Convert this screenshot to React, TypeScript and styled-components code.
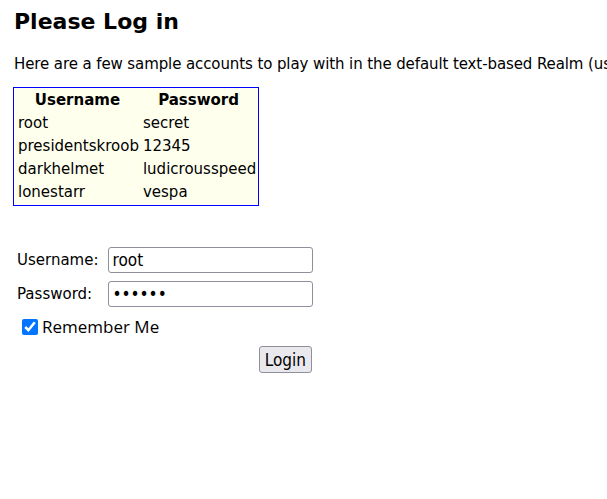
import React from "react";
import styled, { createGlobalStyle } from "styled-components";

const GlobalStyle = createGlobalStyle`
  html, body { margin: 0; padding: 0; background: #ffffff; }
  body {
    padding: 0 14px;
    font-family: "DejaVu Sans", Verdana, sans-serif;
    font-size: 15px;
    color: #000;
    overflow: hidden;
  }
`;

const Page = styled.div`
  width: 593px;
`;

const Title = styled.h1`
  margin: 8px 0 0 0;
  font-size: 22px;
  font-weight: bold;
  line-height: 28px;
`;

const Intro = styled.p`
  margin: 19px 0 0 0;
  line-height: 18px;
  white-space: nowrap;
  overflow: hidden;
  letter-spacing: -0.1px;
`;

const Accounts = styled.table`
  margin-top: 14px;
  margin-left: -1px;
  border: 1px solid #0000ff;
  background: #ffffee;
  border-spacing: 2px;
`;

const HeadCell = styled.th`
  font-weight: bold;
  padding: 2px 1px;
  line-height: 17px;
  text-align: center;
`;

const Cell = styled.td`
  padding: 2px 0 2px 2px;
  line-height: 17px;
  white-space: nowrap;
`;

const LoginForm = styled.form`
  margin-top: 36px;
`;

const FormTable = styled.table`
  border-spacing: 2px;
`;

const Label = styled.td`
  padding: 1px 6px 1px 1px;
  line-height: 17px;
  white-space: nowrap;
`;

const FieldCell = styled.td`
  padding: 2px 1px;
`;

const TextInput = styled.input`
  box-sizing: border-box;
  display: block;
  width: 205px;
  height: 26px;
  border: 1px solid #8f8f9d;
  border-radius: 3px;
  padding: 1px 4px;
  font-family: "DejaVu Sans Condensed", "Open Sans", sans-serif;
  font-size: 17px;
  color: #000;
  background: #fff;
  margin: 1px 0;
`;

const CheckRow = styled.label`
  display: flex;
  align-items: center;
  gap: 4px;
  margin: 5px 0 0 8px;
  font-family: "Open Sans", "Liberation Sans", sans-serif;
  font-size: 17px;
  line-height: 20px;
`;

const Check = styled.input`
  width: 16px;
  height: 16px;
  margin: 0;
  accent-color: #0075ff;
`;

const ButtonRow = styled.div`
  width: 298px;
  display: flex;
  justify-content: flex-end;
  margin-top: 9px;
`;

const LoginButton = styled.button`
  height: 27px;
  padding: 0 5px;
  border: 1px solid #8f8f9d;
  border-radius: 3px;
  background: #e9e9ed;
  font-family: "DejaVu Sans Condensed", "Open Sans", sans-serif;
  font-size: 17px;
  color: #000;
`;

const accounts = [
  ["root", "secret"],
  ["presidentskroob", "12345"],
  ["darkhelmet", "ludicrousspeed"],
  ["lonestarr", "vespa"],
];

export default function App() {
  return (
    <Page>
      <GlobalStyle />
      <Title>Please Log in</Title>
      <Intro>
        Here are a few sample accounts to play with in the default text-based Realm (us
      </Intro>
      <Accounts>
        <thead>
          <tr>
            <HeadCell>Username</HeadCell>
            <HeadCell>Password</HeadCell>
          </tr>
        </thead>
        <tbody>
          {accounts.map(([u, p]) => (
            <tr key={u}>
              <Cell>{u}</Cell>
              <Cell>{p}</Cell>
            </tr>
          ))}
        </tbody>
      </Accounts>
      <LoginForm onSubmit={(e) => e.preventDefault()}>
        <FormTable>
          <tbody>
            <tr>
              <Label>Username:</Label>
              <FieldCell>
                <TextInput type="text" defaultValue="root" />
              </FieldCell>
            </tr>
            <tr>
              <Label>Password:</Label>
              <FieldCell>
                <TextInput type="password" defaultValue="secret" />
              </FieldCell>
            </tr>
          </tbody>
        </FormTable>
        <CheckRow>
          <Check type="checkbox" defaultChecked />
          Remember Me
        </CheckRow>
        <ButtonRow>
          <LoginButton type="submit">Login</LoginButton>
        </ButtonRow>
      </LoginForm>
    </Page>
  );
}
